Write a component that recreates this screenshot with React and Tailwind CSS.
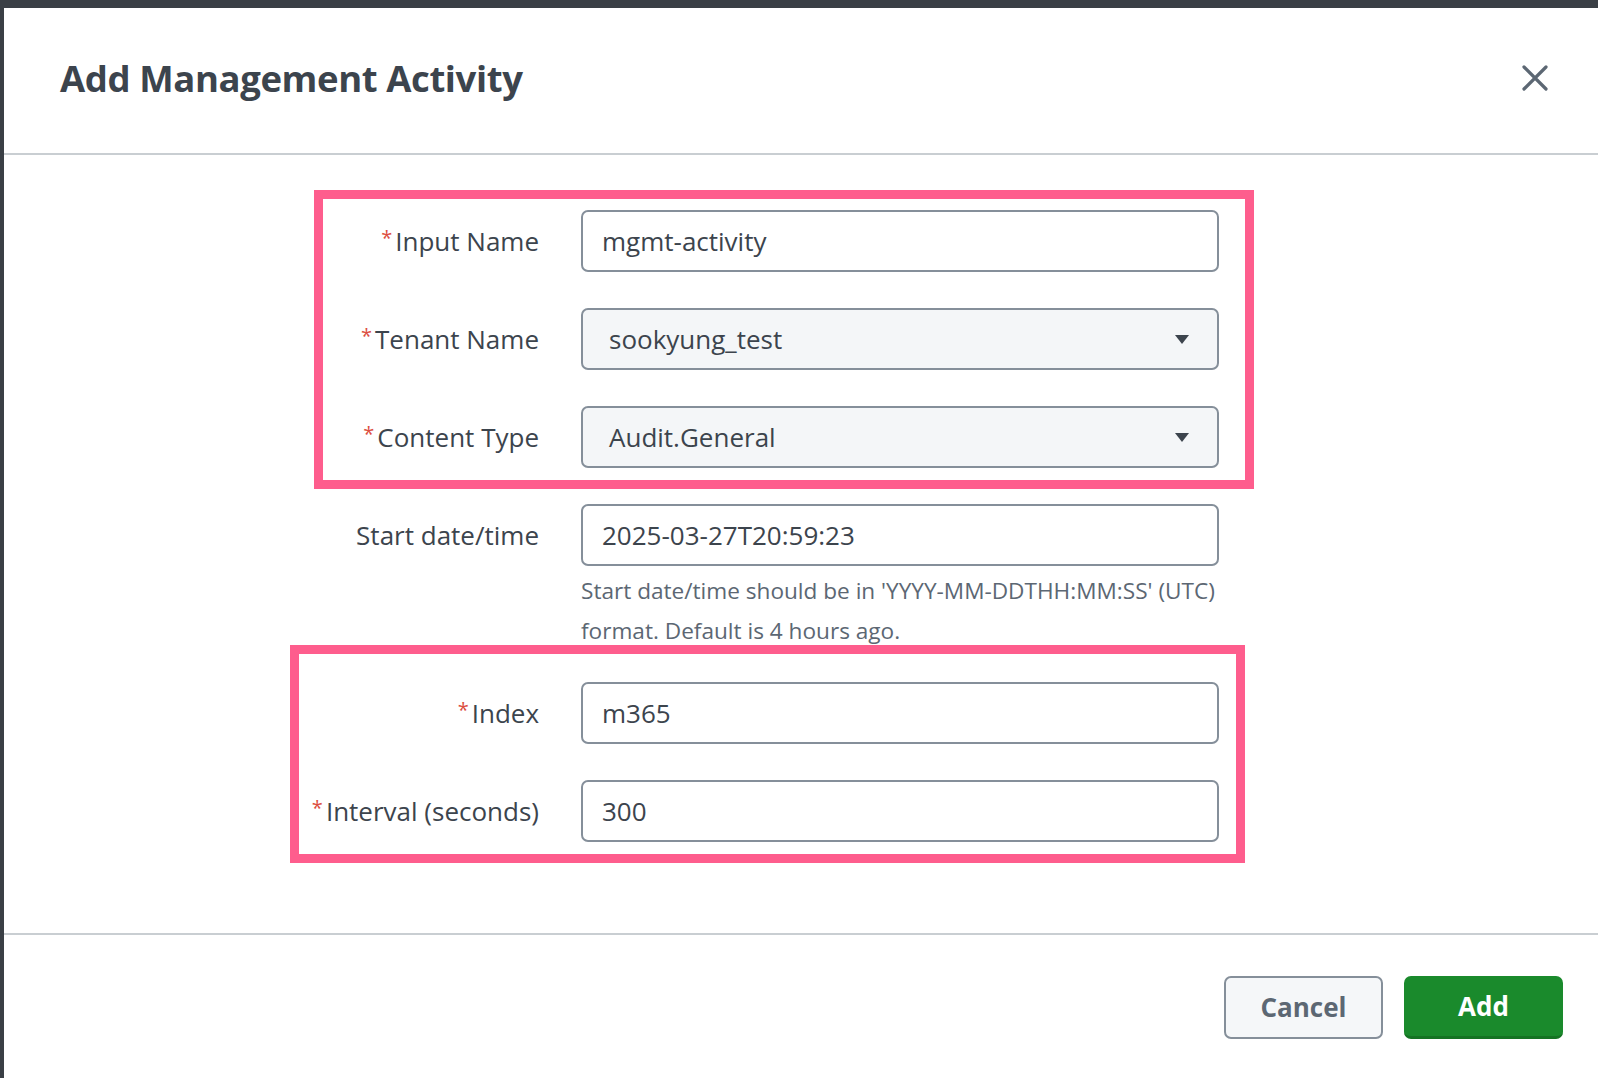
import React from 'react';

const font = { fontFamily: '"Open Sans", "Liberation Sans", sans-serif' };

function Label({ text, required }) {
  return (
    <div className="flex justify-end items-center text-[26px] text-[#3c444d] leading-none whitespace-nowrap">
      {required && <span className="text-[#dc4e41] text-[20px] mr-[3px] -mt-[7px]">*</span>}
      <span>{text}</span>
    </div>
  );
}

function TextInput({ value }) {
  return (
    <div className="w-[638px] h-[62px] border-2 border-[#858f9a] rounded-[7px] bg-white flex items-center pl-[19px] text-[26px] text-[#3c444d]">
      {value}
    </div>
  );
}

function SelectInput({ value }) {
  return (
    <div className="w-[638px] h-[62px] border-2 border-[#858f9a] rounded-[7px] bg-[#f4f6f8] flex items-center justify-between pl-[26px] pr-[28px] text-[26px] text-[#3c444d]">
      <span>{value}</span>
      <svg width="14" height="9" viewBox="0 0 14 9">
        <path d="M0 0 L14 0 L7 9 Z" fill="#3c444d" />
      </svg>
    </div>
  );
}

function Row({ labelWidth, label, required, children }) {
  return (
    <div className="flex items-start">
      <div className="h-[62px] flex items-center justify-end shrink-0" style={{ width: labelWidth }}>
        <Label text={label} required={required} />
      </div>
      <div className="ml-[42px]">{children}</div>
    </div>
  );
}

export default function App() {
  return (
    <div className="w-[1598px] h-[1078px] bg-[#3a3f45] pt-[8px] pl-[4px] overflow-hidden" style={font}>
      <div className="bg-white h-full flex flex-col">
        {/* Header */}
        <div className="h-[147px] flex items-center justify-between pl-[56px] pr-[50px] border-b-2 border-[#c9ced2]">
          <h1 className="text-[36.5px] font-bold text-[#3c444d] tracking-[-0.4px] -mt-[4px]">Add Management Activity</h1>
          <svg width="26" height="26" viewBox="0 0 26 26" className="-mt-[6px]">
            <path d="M2 2 L24 24 M24 2 L2 24" stroke="#5c6773" strokeWidth="3.2" strokeLinecap="round" />
          </svg>
        </div>

        {/* Body */}
        <div className="flex-1 pt-[35px]">
          <div className="ml-[310px] w-[940px] border-[9px] border-[#fe5d8d] pt-[11px] pb-[12px] flex flex-col gap-[36px]">
            <Row labelWidth={216} label="Input Name" required>
              <TextInput value="mgmt-activity" />
            </Row>
            <Row labelWidth={216} label="Tenant Name" required>
              <SelectInput value="sookyung_test" />
            </Row>
            <Row labelWidth={216} label="Content Type" required>
              <SelectInput value="Audit.General" />
            </Row>
          </div>

          <div className="ml-[319px] mt-[15px]">
            <Row labelWidth={216} label="Start date/time">
              <TextInput value="2025-03-27T20:59:23" />
              <div className="mt-[5px] w-[648px] text-[22.6px] leading-[40px] text-[#5c6773]">
                Start date/time should be in 'YYYY-MM-DDTHH:MM:SS' (UTC) format. Default is 4 hours ago.
              </div>
            </Row>
          </div>

          <div className="ml-[286px] -mt-[6px] w-[955px] border-[9px] border-[#fe5d8d] pt-[28px] pb-[12px] flex flex-col gap-[36px]">
            <Row labelWidth={240} label="Index" required>
              <TextInput value="m365" />
            </Row>
            <Row labelWidth={240} label="Interval (seconds)" required>
              <TextInput value="300" />
            </Row>
          </div>
        </div>

        {/* Footer */}
        <div className="h-[145px] border-t-2 border-[#c9ced2] flex items-start justify-end gap-[21px] pt-[41px] pr-[35px]">
          <button className="w-[159px] h-[63px] rounded-[7px] border-2 border-[#858f9a] bg-[#f5f7f9] text-[26px] font-bold text-[#5c6773]">
            Cancel
          </button>
          <button className="w-[159px] h-[63px] rounded-[7px] bg-[#1a8a2c] border-b-[3px] border-[#157323] text-[26px] font-bold text-white">
            Add
          </button>
        </div>
      </div>
    </div>
  );
}
